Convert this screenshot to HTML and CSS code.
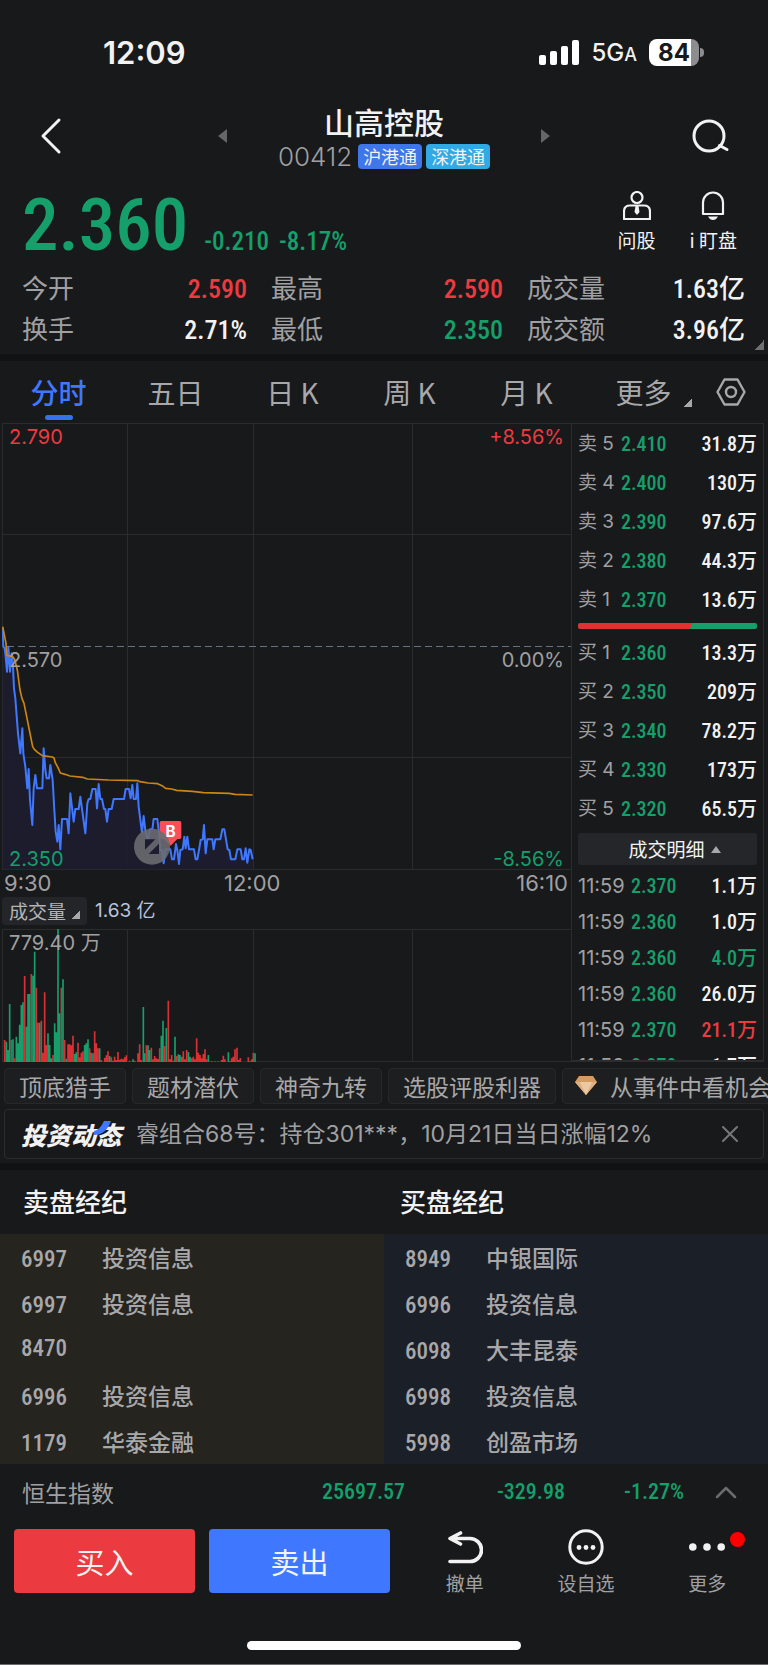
FILE: index.html
```html
<!DOCTYPE html>
<html lang="zh-CN">
<head>
<meta charset="utf-8">
<meta name="viewport" content="width=device-width, initial-scale=1">
<title>山高控股 00412</title>
<link rel="stylesheet" href="styles.css">
</head>
<body>
<div class="app">
  <div class="status">
    <span class="status-time">12:09</span>
    <div class="status-right">
      <svg class="signal" width="40" height="26" viewBox="0 0 40 26" fill="#fff"><rect x="0" y="15" width="7" height="10" rx="2"/><rect x="11" y="11" width="7" height="14" rx="2"/><rect x="22" y="6" width="7" height="19" rx="2"/><rect x="33" y="0" width="7" height="25" rx="2"/></svg>
      <span class="network">5G<small>A</small></span>
      <span class="battery"><b>84</b></span>
    </div>
  </div>

  <header class="header">
    <button class="icon-btn back" aria-label="返回"><svg width="22" height="38" viewBox="0 0 22 38" fill="none" stroke="#f2f2f2" stroke-width="3" stroke-linecap="round" stroke-linejoin="round"><path d="M19 3 3 19l16 16"/></svg></button>
    <button class="icon-btn prev" aria-label="上一只"><svg width="10" height="14" viewBox="0 0 10 14"><path d="M9 0v14L0 7z" fill="#666668"/></svg></button>
    <div class="stock">
      <h1>山高控股</h1>
      <div class="stock-sub"><span class="code">00412</span><span class="tag tag-hu">沪港通</span><span class="tag tag-shen">深港通</span></div>
    </div>
    <button class="icon-btn next" aria-label="下一只"><svg width="10" height="14" viewBox="0 0 10 14"><path d="M0 0v14l9-7z" fill="#666668"/></svg></button>
    <button class="icon-btn search" aria-label="搜索"><svg width="38" height="36" viewBox="0 0 38 36" fill="none" stroke="#f2f2f2" stroke-width="3" stroke-linecap="round"><circle cx="17" cy="18" r="15"/><path d="M27.500 27.500 35 31.500"/></svg></button>
  </header>

  <section class="quote">
    <div class="quote-top">
      <div class="price-line down"><span class="price">2.360</span><span class="change">-0.210</span><span class="change">-8.17%</span></div>
      <div class="quote-actions">
        <button><svg width="28" height="29" viewBox="0 0 28 29" fill="none" stroke="#f2f2f2" stroke-width="2.200" stroke-linejoin="round"><circle cx="14" cy="6.500" r="5.500"/><path d="M7 14.500h14q6 0 6 6V28H1v-7.500q0-6 6-6z"/><path d="M12.500 15h3l1 6-2.500 3-2.500-3z" fill="#f2f2f2" stroke="none"/></svg><span>问股</span></button>
        <button><svg width="24" height="29" viewBox="0 0 24 29" fill="none" stroke="#f2f2f2" stroke-width="2.200" stroke-linejoin="round"><path d="M2 23V11.500a10 10 0 0 1 20 0V23z"/><path d="M7 25.500h10q-2 3.500-5 3.500t-5-3.500z" fill="#f2f2f2" stroke="none"/></svg><span>i 盯盘</span></button>
      </div>
    </div>
    <dl class="stats">
      <div><dt>今开</dt><dd class="up">2.590</dd></div>
      <div><dt>最高</dt><dd class="up">2.590</dd></div>
      <div><dt>成交量</dt><dd>1.63亿</dd></div>
      <div><dt>换手</dt><dd>2.71%</dd></div>
      <div><dt>最低</dt><dd class="down">2.350</dd></div>
      <div><dt>成交额</dt><dd>3.96亿</dd></div>
    </dl>
    <i class="corner expand"></i>
  </section>

  <nav class="tabs">
    <button class="active">分时</button>
    <button>五日</button>
    <button>日 K</button>
    <button>周 K</button>
    <button>月 K</button>
    <button class="more">更多<i class="corner"></i></button>
    <button class="settings" aria-label="设置"><svg width="30" height="28" viewBox="0 0 30 28" fill="none" stroke="#a8a8aa" stroke-width="2.400" stroke-linejoin="round"><path d="M8.500 1.500h13L28.500 14l-7 12.500h-13L1.500 14z"/><circle cx="15" cy="14" r="5"/></svg></button>
  </nav>

  <main class="market">
    <div class="charts">
      <div class="chart">
        <svg class="plot" viewBox="0 0 569 447" preserveAspectRatio="none" fill="none">
          <path class="grid" d="M.5 0V447M125.500 0V447M251.500 0V447M410.500 0V447M0 .5H569M0 111.500H569M0 334.500H569M0 446.500H569"/>
          <path class="base" d="M5 223.500H569"/>
          <g transform="translate(-2 197) scale(.33333)">
            <path class="area" d="M8 748 8 25 10 80 14 85 17 110 21 155 25 80 30 155 35 100 38 120 42 205 46 235 54 340 61 400 67 325 70 400 76 440 82 505 86 447 90 540 97 615 101 505 106 465 111 505 127 505 131 385 136 450 140 475 147 475 151 435 158 480 163 570 167 635 172 665 176 615 181 688 186 597 201 597 206 640 211 520 221 605 226 567 236 567 241 530 246 567 256 640 262 550 266 537 271 537 277 507 287 507 291 565 296 492 301 537 306 537 312 567 316 567 321 605 326 567 335 567 341 537 372 537 377 507 387 507 392 535 397 495 401 537 408 537 412 490 416 560 421 600 426 638 431 588 436 630 443 665 450 628 457 628 461 597 472 597 477 640 481 690 486 690 491 730 496 688 511 688 516 718 522 718 528 672 532 690 537 732 541 690 548 688 553 650 557 685 562 650 567 688 582 688 587 718 592 718 597 690 602 660 608 658 612 615 617 700 622 658 637 658 641 688 646 658 661 658 667 628 673 628 678 658 683 688 688 690 693 718 706 718 712 688 722 688 727 718 732 718 737 685 742 728 748 688 752 690 758 718V748z"/>
            <path class="line-price" d="M8 25 10 80 14 85 17 110 21 155 25 80 30 155 35 100 38 120 42 205 46 235 54 340 61 400 67 325 70 400 76 440 82 505 86 447 90 540 97 615 101 505 106 465 111 505 127 505 131 385 136 450 140 475 147 475 151 435 158 480 163 570 167 635 172 665 176 615 181 688 186 597 201 597 206 640 211 520 221 605 226 567 236 567 241 530 246 567 256 640 262 550 266 537 271 537 277 507 287 507 291 565 296 492 301 537 306 537 312 567 316 567 321 605 326 567 335 567 341 537 372 537 377 507 387 507 392 535 397 495 401 537 408 537 412 490 416 560 421 600 426 638 431 588 436 630 443 665 450 628 457 628 461 597 472 597 477 640 481 690 486 690 491 730 496 688 511 688 516 718 522 718 528 672 532 690 537 732 541 690 548 688 553 650 557 685 562 650 567 688 582 688 587 718 592 718 597 690 602 660 608 658 612 615 617 700 622 658 637 658 641 688 646 658 661 658 667 628 673 628 678 658 683 688 688 690 693 718 706 718 712 688 722 688 727 718 732 718 737 685 742 728 748 688 752 690 758 718"/>
            <path class="line-avg" d="M8 20 14 50 18 70 20 106 38 110 44 118 52 150 60 210 66 236 72 250 80 290 88 330 98 380 103 388 113 397 127 407 157 411 162 414 166 428 175 445 181 459 195 463 210 468 248 472 262 477 325 480 414 482 420 485 445 489 473 491 486 497 497 505 515 507 530 511 577 514 610 518 688 520 705 523 758 525"/>
            <path d="M484 603h55q5 0 5 5v44q0 5-5 5h-7l-20 20-21-20h-7q-5 0-5-5v-44q0-5 5-5z" fill="#fb4e58"/>
            <circle cx="456" cy="680" r="54" fill="#6c6c72" fill-opacity=".88"/>
            <path d="M435 658h31l-31 31zM477 671v31h-31z" fill="#1d1c30"/>
            <text x="512" y="651" class="buy-mark">B</text>
          </g>
        </svg>
        <span class="lab tl up">2.790</span><span class="lab tr up">+8.56%</span>
        <span class="lab ml">2.570</span><span class="lab mr">0.00%</span>
        <span class="lab bl down">2.350</span><span class="lab br down">-8.56%</span>
      </div>
      <div class="times"><span>9:30</span><span>12:00</span><span>16:10</span></div>
      <div class="vol-head"><button>成交量<i class="corner"></i></button><span>1.63 亿</span></div>
      <div class="chart volume">
        <svg class="plot" viewBox="0 0 569 133" preserveAspectRatio="none" fill="none">
          <path class="grid" d="M.5 0V133M125.500 0V133M251.500 0V133M410.500 0V133M0 .5H569M0 132.500H569"/>
          <g transform="translate(-2 -69) scale(.33333)" stroke-width="5">
            <path class="bar-up" d="M14 607V540M34 607V540M44 607V595M74 607V348M94 607V342M109 607V383M114 607V488M124 607V482M129 607V578M134 607V397M139 607V555M159 607V585M184 607V383M194 607V540M204 607V553M209 607V553M214 607V556M219 607V527M234 607V548M239 607V592M244 607V578M249 607V574M269 607V565M274 607V578M284 607V514M289 607V550M294 607V565M304 607V600M314 607V594M319 607V586M324 607V574M334 607V592M339 607V602M344 607V590M349 607V600M354 607V576M359 607V599M364 607V596M369 607V598M374 607V592M379 607V586M389 607V602M404 607V602M414 607V580M419 607V553M424 607V600M439 607V556M454 607V563M459 607V598M464 607V588M469 607V595M474 607V597M479 607V565M494 607V558M505 607V422M510 607V597M515 607V585M520 607V602M530 607V588M545 607V590M550 607V574M555 607V598M560 607V570M575 607V595M580 607V590M585 607V598M590 607V535M595 607V578M600 607V585M605 607V595M610 607V582M615 607V568M620 607V598M635 607V603M645 607V604M655 607V604M665 607V600M670 607V587M675 607V598M690 607V603M695 607V595M700 607V590M705 607V568M711 607V563M716 607V600M721 607V594M745 607V592M750 607V604M755 607V598M760 607V578"/>
            <path class="bar-down" d="M19 607V545M24 607V570M29 607V432M39 607V538M49 607V530M54 607V550M59 607V494M64 607V435M69 607V427M79 607V500M84 607V402M89 607V402M99 607V347M104 607V275M119 607V488M144 607V520M149 607V555M154 607V595M164 607V490M169 607V517M174 607V207M179 607V460M189 607V358M199 607V596M224 607V582M229 607V577M254 607V555M259 607V550M264 607V538M279 607V580M299 607V565M329 607V588M399 607V598M430 607V441M434 607V580M444 607V556M449 607V570M484 607V527M489 607V482M499 607V504M525 607V530M535 607V583M540 607V585M565 607V576M570 607V590M625 607V585M685 607V577M765 607V580"/>
          </g>
        </svg>
        <span class="lab tl">779.40 万</span>
      </div>
    </div>

    <aside class="book">
      <table class="levels">
        <tr><th>卖 5</th><td class="down">2.410</td><td>31.8万</td></tr>
        <tr><th>卖 4</th><td class="down">2.400</td><td>130万</td></tr>
        <tr><th>卖 3</th><td class="down">2.390</td><td>97.6万</td></tr>
        <tr><th>卖 2</th><td class="down">2.380</td><td>44.3万</td></tr>
        <tr><th>卖 1</th><td class="down">2.370</td><td>13.6万</td></tr>
      </table>
      <div class="ratio"></div>
      <table class="levels">
        <tr><th>买 1</th><td class="down">2.360</td><td>13.3万</td></tr>
        <tr><th>买 2</th><td class="down">2.350</td><td>209万</td></tr>
        <tr><th>买 3</th><td class="down">2.340</td><td>78.2万</td></tr>
        <tr><th>买 4</th><td class="down">2.330</td><td>173万</td></tr>
        <tr><th>买 5</th><td class="down">2.320</td><td>65.5万</td></tr>
      </table>
      <button class="detail">成交明细<svg width="10" height="7" viewBox="0 0 10 7"><path d="M5 0l5 7H0z" fill="#a8a8aa"/></svg></button>
      <div class="trades">
        <table class="levels ticks">
          <tr><th>11:59</th><td class="down">2.370</td><td>1.1万</td></tr>
          <tr><th>11:59</th><td class="down">2.360</td><td>1.0万</td></tr>
          <tr><th>11:59</th><td class="down">2.360</td><td class="down">4.0万</td></tr>
          <tr><th>11:59</th><td class="down">2.360</td><td>26.0万</td></tr>
          <tr><th>11:59</th><td class="down">2.370</td><td class="up">21.1万</td></tr>
          <tr><th>11:59</th><td class="down">2.370</td><td>1.7万</td></tr>
        </table>
      </div>
    </aside>
  </main>

  <div class="chips">
    <button>顶底猎手</button><button>题材潜伏</button><button>神奇九转</button><button>选股评股利器</button>
    <button class="gem"><svg width="22" height="20" viewBox="0 0 22 20"><path d="M4 0h14l4 6-11 13L0 6z" fill="#d49b62"/><path d="M0 6h22L11 19z" fill="#dfb084"/><path d="M5 6h12l-6 13z" fill="#ebc9a5"/></svg>从事件中看机会</button>
  </div>

  <div class="news">
    <span class="news-logo">投资动态<svg width="18" height="15" viewBox="0 0 18 15"><path d="M10 0h7Q12 14 0 14v-4Q6 9 10 0z" fill="#3f78ff"/></svg></span>
    <a href="#">睿组合68号：持仓301***，10月21日当日涨幅12%</a>
    <button class="icon-btn" aria-label="关闭"><svg width="16" height="16" viewBox="0 0 16 16" fill="none" stroke="#77777a" stroke-width="2" stroke-linecap="round"><path d="M1 1l14 14M15 1 1 15"/></svg></button>
  </div>

  <section class="brokers">
    <div class="broker sell">
      <h2>卖盘经纪</h2>
      <table>
        <tr><td>6997</td><td>投资信息</td></tr>
        <tr><td>6997</td><td>投资信息</td></tr>
        <tr><td>8470</td><td></td></tr>
        <tr><td>6996</td><td>投资信息</td></tr>
        <tr><td>1179</td><td>华泰金融</td></tr>
      </table>
    </div>
    <div class="broker buy">
      <h2>买盘经纪</h2>
      <table>
        <tr><td>8949</td><td>中银国际</td></tr>
        <tr><td>6996</td><td>投资信息</td></tr>
        <tr><td>6098</td><td>大丰昆泰</td></tr>
        <tr><td>6998</td><td>投资信息</td></tr>
        <tr><td>5998</td><td>创盈市场</td></tr>
      </table>
    </div>
  </section>

  <div class="index">
    <span class="index-name">恒生指数</span>
    <span class="num down">25697.57</span>
    <span class="num down">-329.98</span>
    <span class="num down">-1.27%</span>
    <button class="icon-btn" aria-label="展开"><svg width="22" height="14" viewBox="0 0 22 14" fill="none" stroke="#6c6c6f" stroke-width="2.500" stroke-linecap="round" stroke-linejoin="round"><path d="M2 12l9-9 9 9"/></svg></button>
  </div>

  <footer class="actions">
    <button class="trade buy-btn">买入</button>
    <button class="trade sell-btn">卖出</button>
    <div class="tools">
      <button class="tool"><svg width="36" height="36" viewBox="0 0 36 36" fill="none" stroke="#f2f2f2" stroke-width="3.600" stroke-linecap="round" stroke-linejoin="round"><path d="M13.500 4 3 9.500 13.500 15M3 9.500H23a11.500 11.500 0 0 1 0 23H3"/></svg><span>撤单</span></button>
      <button class="tool"><svg width="36" height="36" viewBox="0 0 36 36" fill="#f2f2f2"><circle cx="18" cy="18" r="16.200" fill="none" stroke="#f2f2f2" stroke-width="3"/><circle cx="11" cy="18.500" r="2.400"/><circle cx="18" cy="18.500" r="2.400"/><circle cx="25" cy="18.500" r="2.400"/></svg><span>设自选</span></button>
      <button class="tool"><svg width="36" height="36" viewBox="0 0 36 36" fill="#f2f2f2"><circle cx="3.800" cy="18" r="3.800"/><circle cx="18" cy="18" r="3.800"/><circle cx="32.200" cy="18" r="3.800"/></svg><span>更多</span><i class="badge"></i></button>
    </div>
  </footer>
  <div class="home"></div>
</div>
</body>
</html>
```

FILE: styles.css
```css
:root {
  --bg: #18191b;
  --gap: #111214;
  --line: #2b2c2e;
  --text: #f2f2f2;
  --muted: #a0a0a2;
  --red: #ec3b40;
  --green: #159f6b;
  --blue: #3f78ff;
  --cjk: "Noto Sans CJK SC", sans-serif;
  --num: "Roboto Condensed", Roboto, "Noto Sans CJK SC", sans-serif;
  --sans: Inter, "Noto Sans CJK SC", sans-serif;
}

* { box-sizing: border-box; }
body { margin: 0; background: var(--bg); color: var(--text); font-family: var(--sans); }
button { margin: 0; padding: 0; border: 0; background: none; color: inherit; font: inherit; }
svg { display: block; flex: none; }
h1, h2, dl, dd { margin: 0; }
table { width: 100%; border-collapse: collapse; }
th, td { padding: 0; font-weight: 400; text-align: left; white-space: nowrap; }

.app { border-bottom: 1px solid #6b6b6d; overflow: hidden; }
.up { color: var(--red); }
.down { color: var(--green); }
.num { font-family: var(--num); }
.icon-btn { display: flex; align-items: center; justify-content: center; }
.corner { display: inline-block; width: 8px; height: 8px; background: linear-gradient(135deg, transparent 50%, #a8a8aa 50%); }

.status { display: flex; justify-content: space-between; align-items: center; height: 102px; padding: 3px 69px 0 103px; }
.status-time { font-size: 31px; font-weight: 600; line-height: 40px; }
.status-right { display: flex; align-items: center; gap: 12px; }
.network { padding-top: 2px; font-size: 24px; font-weight: 500; line-height: 32px; }
.network small { font-size: 18px; }
.battery { position: relative; width: 50px; height: 27px; border-radius: 8px; background: linear-gradient(90deg, #fff 84%, #8d8d8f 84%); color: #18191b; font-size: 24px; line-height: 27px; text-align: center; }
.battery::after { content: ""; position: absolute; left: 51px; top: 9px; width: 4px; height: 9px; border-radius: 0 4px 4px 0; background: #8d8d8f; }

.header { display: grid; grid-template-columns: 60px 1fr auto 1fr 60px; align-items: center; height: 67px; padding: 0 18px; }
.back { justify-content: flex-end; padding-right: 16px; }
.search { justify-content: flex-start; padding-left: 2px; }
.prev { justify-content: flex-end; padding-right: 50px; }
.next { justify-content: flex-start; padding-left: 51px; }
.stock { text-align: center; }
.stock h1 { font: 500 30px/38px var(--cjk); }
.stock-sub { display: flex; justify-content: center; align-items: center; gap: 4px; height: 25px; margin-top: 4px; }
.code { margin-right: 2px; color: var(--muted); font-size: 26px; font-weight: 300; line-height: 25px; }
.tag { padding: 0 5px; border-radius: 4px; font: 400 18px/25px var(--cjk); }
.tag-hu { background: #3f76ea; }
.tag-shen { background: #30a9e4; }

.quote { position: relative; padding: 22px 23px 5px 22px; }
.quote-top { display: flex; justify-content: space-between; height: 64px; }
.price-line { display: flex; align-items: baseline; padding-top: 2px; font-family: var(--num); font-weight: 500; }
.price { margin-right: 16px; font-size: 73px; line-height: 64px; }
.change { margin-right: 10px; font-size: 25px; line-height: 30px; }
.quote-actions { display: flex; gap: 34px; padding-right: 8px; }
.quote-actions button { display: flex; flex-direction: column; align-items: center; gap: 8px; height: 61px; font: 400 19px/24px var(--cjk); }
.stats { display: grid; grid-template-columns: 225fr 232fr 218fr; column-gap: 24px; margin-top: 12px; }
.stats div { display: flex; justify-content: space-between; align-items: baseline; height: 41px; }
.stats dt { color: var(--muted); font: 400 26px/39px var(--cjk); }
.stats dd { font: 500 26px/39px var(--num); }
.expand { position: absolute; right: 4px; bottom: 4px; width: 10px; height: 10px; opacity: .6; }

.tabs { display: grid; grid-template-columns: repeat(5, 117fr) 113fr 70fr; height: 69px; border-top: 7px solid var(--gap); }
.tabs button { position: relative; display: flex; justify-content: center; align-items: center; color: #a8a8aa; font: 400 28px/40px var(--cjk); white-space: nowrap; }
.tabs .active { color: var(--blue); font-weight: 500; }
.tabs .active::after { content: ""; position: absolute; left: 50%; bottom: 3px; width: 28px; height: 5px; margin-left: -14px; border-radius: 3px; background: #3573ea; }
.tabs .more { gap: 12px; padding-left: 24px; }
.tabs .settings { padding-right: 5px; }
.more .corner { align-self: flex-end; margin-bottom: 16px; }

.market { display: grid; grid-template-columns: 1fr 193px; padding: 0 4px 0 2px; }
.chart { position: relative; height: 447px; }
.volume { height: 133px; }
.plot { width: 100%; height: 100%; }
.grid { stroke: var(--line); stroke-width: 1; }
.base { stroke: #687089; stroke-width: 1; stroke-dasharray: 7 4; }
.line-price, .line-avg { stroke-linejoin: round; }
.line-price { stroke: var(--blue); stroke-width: 6; }
.line-avg { stroke: #cc8515; stroke-width: 5; }
.area { fill: #1e1d30; fill-opacity: .9; }
.bar-up { stroke: #d93036; }
.bar-down { stroke: var(--green); }
.buy-mark { fill: #fff; font: 700 46px Inter, sans-serif; text-anchor: middle; }
.lab { position: absolute; font-size: 20px; line-height: 24px; color: var(--muted); }
.lab.up { color: var(--red); }
.lab.down { color: var(--green); }
.tl { left: 7px; top: 2px; }
.tr { right: 7px; top: 2px; }
.ml { left: 7px; top: 225px; }
.mr { right: 7px; top: 225px; }
.bl { left: 7px; bottom: -1px; }
.br { right: 7px; bottom: -1px; }
.times { display: grid; grid-template-columns: 220px 1fr auto; height: 27px; padding: 0 3px 0 2px; color: var(--muted); font-size: 22px; line-height: 27px; }
.vol-head { display: flex; align-items: center; gap: 8px; height: 28px; margin-bottom: 4px; color: #b8c4de; font: 400 19px/24px var(--sans); }
.vol-head button { height: 28px; padding: 0 7px; border-radius: 4px; background: #242528; color: #b4b4b6; font: 400 19px/26px var(--cjk); }
.vol-head .corner { margin-left: 6px; }

.book { border: 1px solid var(--line); border-width: 1px 1px 2px; padding: 0 6px; }
.levels { table-layout: fixed; }
.levels tr { height: 39px; }
.levels th { width: 43px; color: var(--muted); font-size: 19px; line-height: 24px; }
.levels td { font: 500 20px/24px var(--num); }
.levels td:last-child { text-align: right; }
.ticks tr { height: 36px; }
.ticks th { width: 53px; font-size: 20px; }
.ratio { height: 6px; margin: 4px 0; border-radius: 2px; background: linear-gradient(110deg, #e03236 63%, var(--green) 63%); }
.detail { display: flex; justify-content: center; align-items: center; gap: 6px; width: 100%; height: 32px; margin: 5px 0 3px; padding-left: 14px; border-radius: 3px; background: #252629; font: 400 19px/30px var(--cjk); }
.trades { height: 192px; overflow: hidden; }

.chips { display: flex; gap: 6px; padding: 6px 0 0 4px; overflow: hidden; }
.chips button { flex: none; height: 36px; padding: 0 14px; border: 1px solid #27282a; border-radius: 4px; background: #1d1e20; color: #a8a8aa; font: 400 23px/32px var(--cjk); }
.chips .gem { display: flex; align-items: center; gap: 13px; padding: 0 12px; }

.news { display: flex; align-items: center; height: 50px; margin: 5px 4px 4px; padding: 0 25px 0 16px; border: 1px solid var(--line); border-radius: 4px; }
.news-logo { position: relative; margin-right: 15px; font: italic 900 25px/34px var(--cjk); }
.news-logo svg { position: absolute; right: 9px; top: 4px; }
.news a { flex: 1; color: var(--muted); font-size: 23px; font-weight: 400; line-height: 34px; text-decoration: none; white-space: nowrap; }

.brokers { display: grid; grid-template-columns: 1fr 1fr; border-top: 7px solid var(--gap); }
.broker h2 { padding: 0 0 2px 23px; font: 500 26px/62px var(--cjk); }
.buy h2 { padding-left: 16px; }
.sell table { background: #25241f; }
.buy table { background: #1b1f27; }
.broker tr { height: 46px; color: #a8a8aa; }
.broker td { padding: 8px 0 0; font: 500 23px/30px var(--cjk); vertical-align: baseline; }
.broker td:first-child { width: 102px; padding-left: 21px; font: 500 23px/30px var(--num); }

.index { display: grid; grid-template-columns: 1fr 120px 160px 119px 84px; align-items: center; height: 56px; }
.index-name { padding-left: 22px; color: var(--muted); font: 400 23px/28px var(--cjk); }
.index .num { font-size: 22px; font-weight: 500; line-height: 28px; text-align: right; }

.actions { display: grid; grid-template-columns: 181px 181px 1fr; column-gap: 14px; align-items: start; height: 73px; padding: 9px 0 0 14px; }
.trade { height: 64px; border-radius: 4px; font: 400 29px/62px var(--cjk); }
.buy-btn { background: var(--red); }
.sell-btn { background: var(--blue); }
.tools { display: grid; grid-template-columns: repeat(3, 1fr); }
.tool { position: relative; display: flex; flex-direction: column; align-items: center; gap: 6px; color: var(--muted); font: 400 19px/24px var(--cjk); }
.badge { position: absolute; right: 23px; top: 3px; width: 15px; height: 15px; border-radius: 50%; background: #f00; }
.home { width: 274px; height: 9px; margin: 48px auto 14px; border-radius: 5px; background: #fff; }
```
